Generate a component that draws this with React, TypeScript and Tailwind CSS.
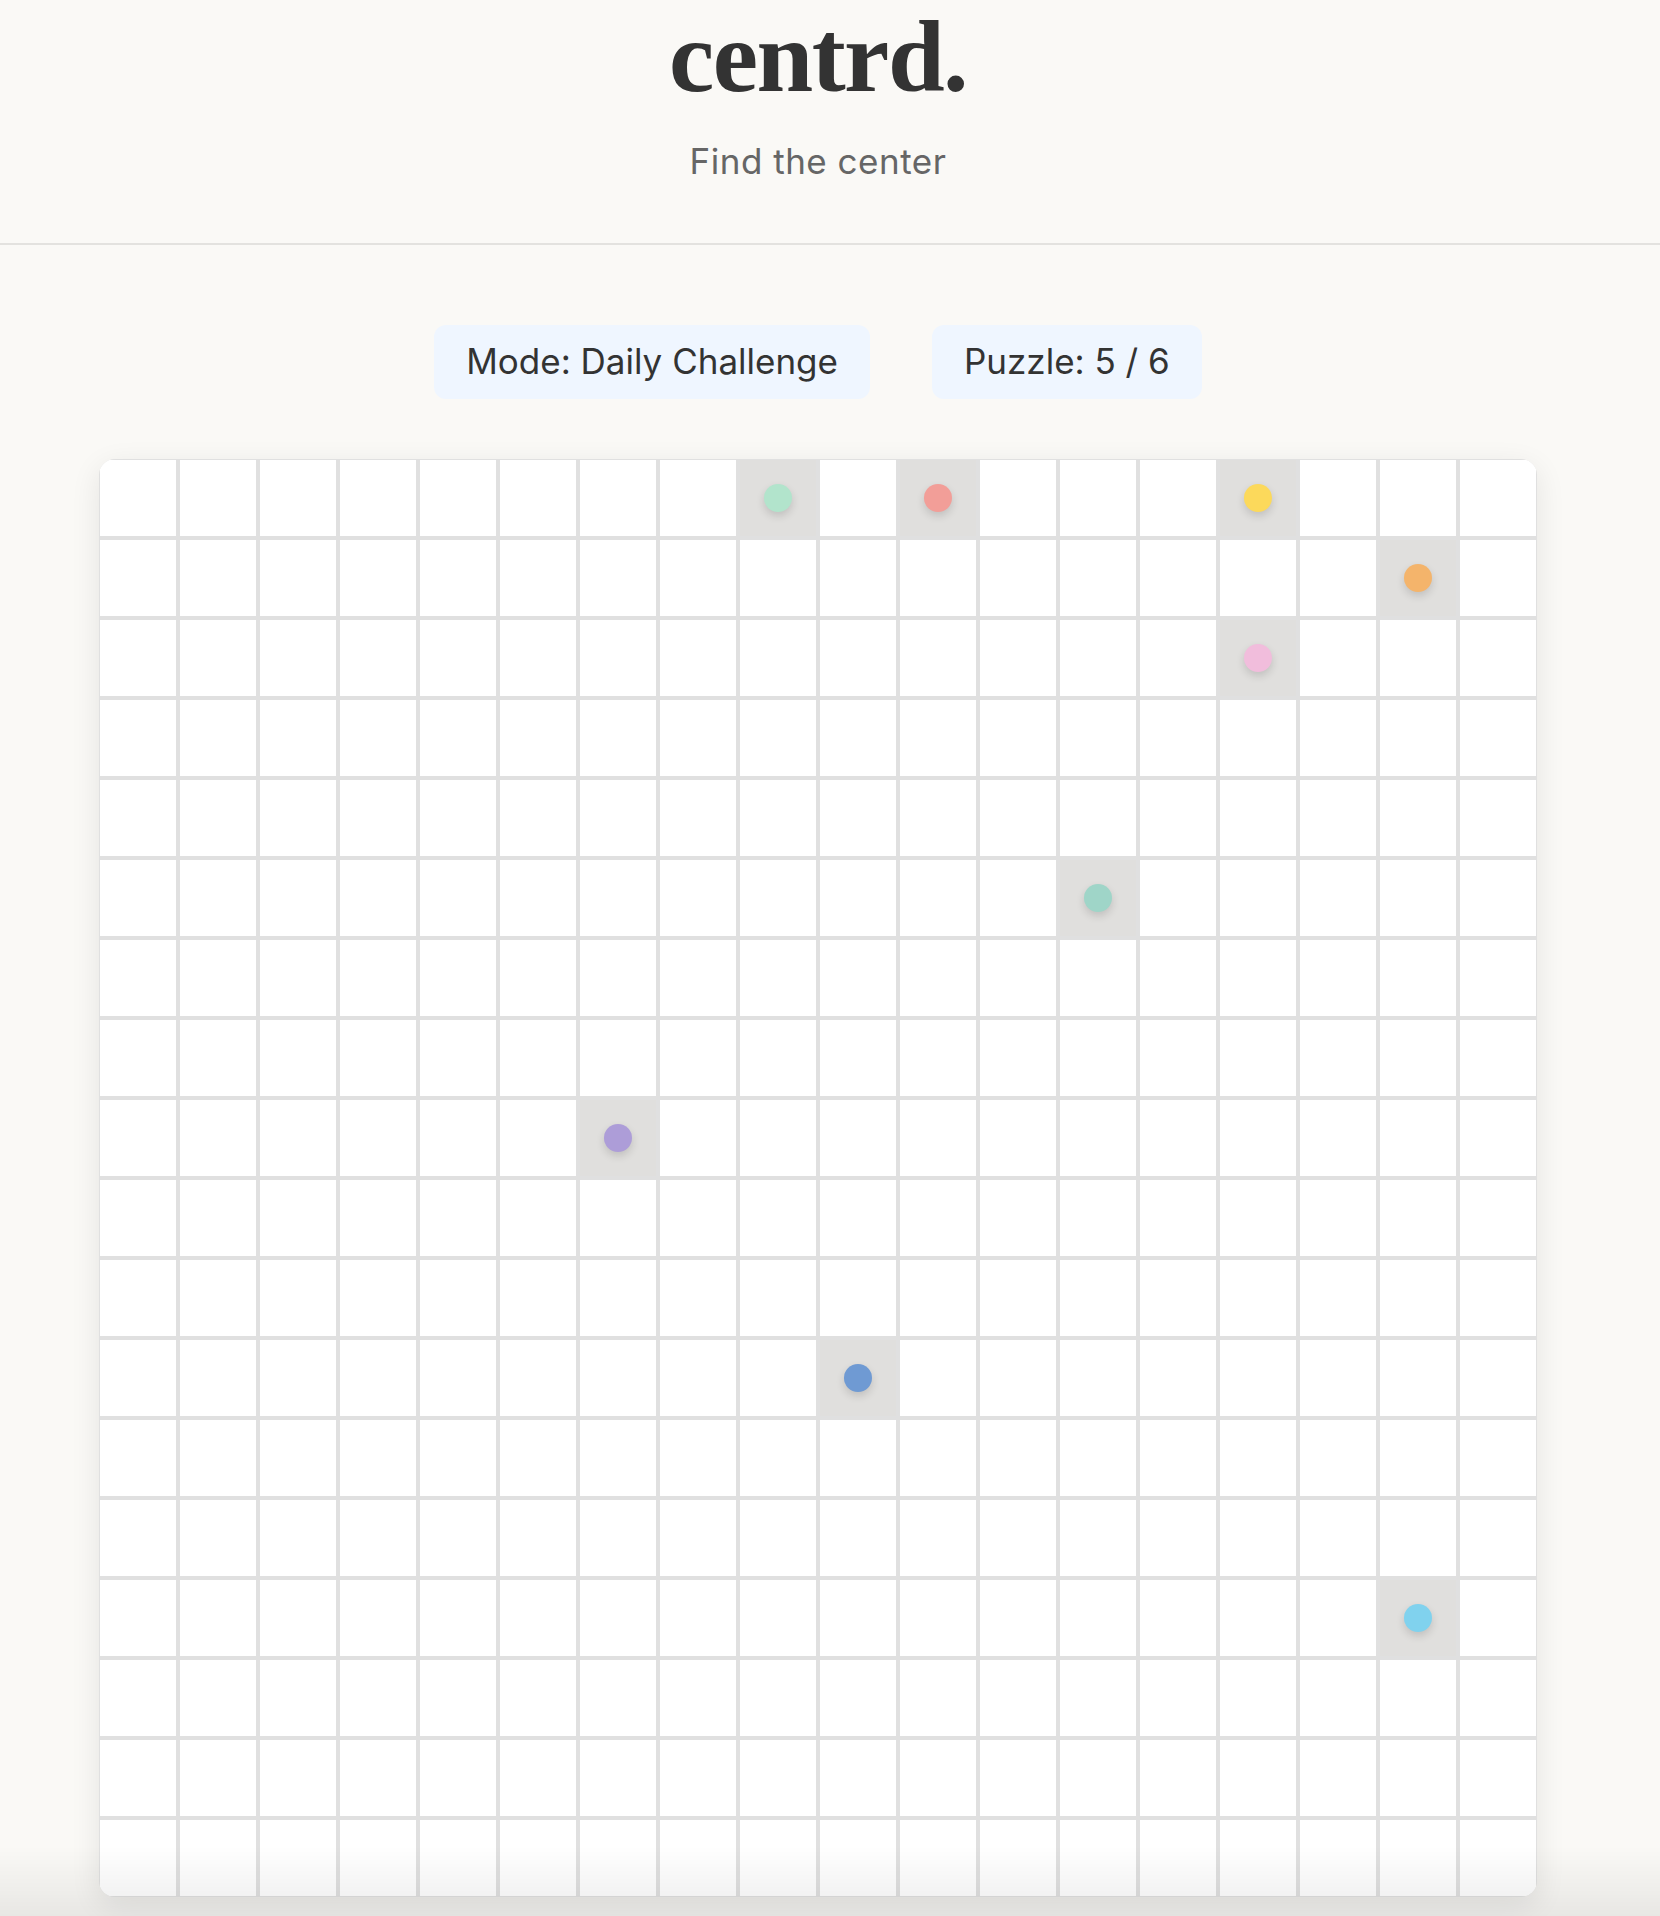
import React from "react";

const DOTS: Record<string, string> = {
  "0-8": "#b2e4cc",
  "0-10": "#f29e98",
  "0-14": "#fcd95b",
  "1-16": "#f4b46b",
  "2-14": "#f1bddc",
  "5-12": "#9fd5c8",
  "8-6": "#ad9dd8",
  "11-9": "#6f9ad3",
  "14-16": "#80d2ee",
};

const SIZE = 18;

export default function App() {
  const cells: React.ReactNode[] = [];
  for (let r = 0; r < SIZE; r++) {
    for (let c = 0; c < SIZE; c++) {
      const color = DOTS[`${r}-${c}`];
      cells.push(
        color ? (
          <div key={`${r}-${c}`} className="flex h-[76px] w-[76px] items-center justify-center bg-[#e0dfdd]">
            <div
              className="h-[28px] w-[28px] rounded-full shadow-[0_4px_8px_rgba(0,0,0,0.14)]"
              style={{ backgroundColor: color }}
            />
          </div>
        ) : (
          <div key={`${r}-${c}`} className="h-[76px] w-[76px] bg-white" />
        )
      );
    }
  }

  return (
    <div className="min-h-screen w-full bg-[#faf9f6] font-['Inter',sans-serif]">
      <header className="w-full border-b-2 border-[#e3e2df] pb-[55px]">
        <div className="flex w-[1636px] flex-col items-center">
          <h1 className="font-['Liberation_Serif',serif] text-[102px] font-bold leading-[113px] tracking-[-1.5px] text-[#333333]">
            centrd.
          </h1>
          <p className="mt-[22px] text-[35px] leading-[52.5px] tracking-[0.5px] text-[#666666]">
            Find the center
          </p>
        </div>
      </header>
      <main className="flex w-[1636px] flex-col items-center pt-[80px]">
        <div className="flex gap-[62px]">
          <div className="flex h-[74px] items-center rounded-[12px] bg-[#eff6ff] px-[32px] text-[35px] text-[#333333]">
            Mode: Daily Challenge
          </div>
          <div className="flex h-[74px] items-center rounded-[12px] bg-[#eff6ff] px-[32px] text-[35px] text-[#333333]">
            Puzzle: 5 / 6
          </div>
        </div>
        <div className="mt-[60px] grid grid-cols-[repeat(18,76px)] gap-[4px] overflow-hidden rounded-[16px] bg-[#e0e0e0] p-[1px] shadow-[0_8px_30px_rgba(0,0,0,0.09)]">
          {cells}
        </div>
        <div className="h-[80px]" />
      </main>
      <div className="pointer-events-none fixed bottom-0 left-0 right-0 h-[70px] bg-linear-to-t from-[rgba(0,0,0,0.07)] to-transparent" />
    </div>
  );
}
